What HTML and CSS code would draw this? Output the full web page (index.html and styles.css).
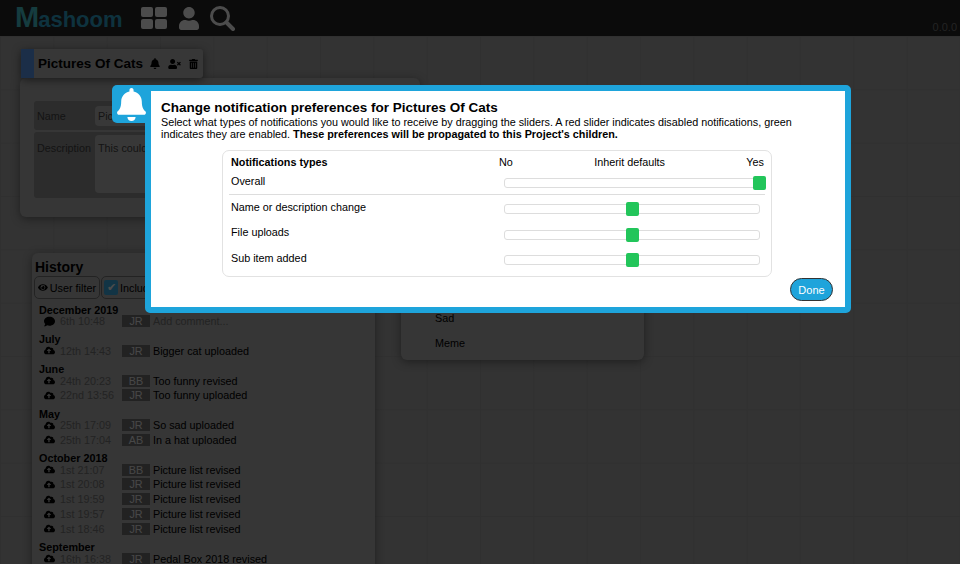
FILE: index.html
```html
<!DOCTYPE html>
<html lang="en">
<head>
    <meta charset="UTF-8">
    <title>Mashoom</title>
    <link rel="stylesheet" href="styles.css">
</head>
<body>
    <!-- Icons used more than once -->
    <svg class="defs" width="0" height="0">
        <symbol id="i-bell" viewBox="0 0 448 512"><path d="M224 512c35.32 0 63.97-28.65 63.97-64H160.03c0 35.35 28.65 64 63.97 64zm215.39-149.71c-19.32-20.76-55.47-51.99-55.47-154.29 0-77.7-54.48-139.9-127.94-155.16V32c0-17.67-14.32-32-31.98-32s-31.98 14.33-31.98 32v20.84C118.56 68.1 64.08 130.3 64.08 208c0 102.3-36.15 133.53-55.47 154.29-6 6.45-8.66 14.16-8.61 21.71.11 16.4 12.98 32 32.1 32h383.8c19.12 0 32-15.6 32.1-32 .05-7.55-2.61-15.27-8.61-21.71z"/></symbol>
        <symbol id="i-cloud" viewBox="0 0 640 512"><path d="M537.6 226.6c4.1-10.7 6.4-22.4 6.4-34.6 0-53-43-96-96-96-19.7 0-38.1 6-53.3 16.2C367 64.2 315.3 32 256 32c-88.4 0-160 71.6-160 160 0 2.7.1 5.4.2 8.1C40.2 219.8 0 273.2 0 336c0 79.5 64.5 144 144 144h368c70.7 0 128-57.3 128-128 0-61.9-44-113.6-102.4-125.4zM393.4 288H328v112c0 8.8-7.2 16-16 16h-48c-8.8 0-16-7.2-16-16V288h-65.4c-14.3 0-21.4-17.2-11.3-27.3l105.4-105.4c6.2-6.2 16.4-6.2 22.6 0l105.4 105.4c10.1 10.1 3 27.3-11.3 27.3z"/></symbol>
        <symbol id="i-comment" viewBox="0 0 512 512"><path d="M256 32C114.6 32 0 125.1 0 240c0 49.6 21.4 95 57 130.7C44.5 421.1 2.7 466 2.2 466.5c-2.2 2.3-2.8 5.7-1.5 8.7S4.8 480 8 480c66.3 0 116-31.8 140.6-51.4 32.7 12.3 69 19.4 107.4 19.4 141.4 0 256-93.1 256-208S397.4 32 256 32z"/></symbol>
    </svg>

    <header class="topbar">
        <div class="logo"><span class="logo-m">M</span>ashoom</div>
        <nav class="topnav">
            <svg class="nav-icon" width="26" height="22" viewBox="0 0 26 22"><rect width="12" height="10" rx="2"/><rect x="14" width="12" height="10" rx="2"/><rect y="12" width="12" height="10" rx="2"/><rect x="14" y="12" width="12" height="10" rx="2"/></svg>
            <svg class="nav-icon" width="20" height="23" viewBox="0 0 448 512"><path d="M224 256c70.7 0 128-57.3 128-128S294.7 0 224 0 96 57.3 96 128s57.3 128 128 128zm89.6 32h-16.7c-22.2 10.2-46.9 16-72.9 16s-50.6-5.8-72.9-16h-16.7C60.2 288 0 348.2 0 422.4V464c0 26.5 21.5 48 48 48h352c26.5 0 48-21.5 48-48v-41.6c0-74.2-60.2-134.4-134.4-134.4z"/></svg>
            <svg class="nav-search" width="25" height="25" viewBox="0 0 25 25"><circle cx="10" cy="10" r="8.5"/><line x1="16.5" y1="16.5" x2="23" y2="23"/></svg>
        </nav>
        <span class="version">0.0.0</span>
    </header>

    <!-- The project canvas, dimmed behind the dialog -->
    <main class="canvas">
        <section class="card details-card">
            <div class="field-row name-row">
                <span class="field-label">Name</span>
                <span class="field-value">Pictures Of Cats</span>
            </div>
            <div class="field-row desc-row">
                <span class="field-label">Description</span>
                <span class="field-value desc-value">This could be anything</span>
            </div>
        </section>

        <div class="title-bar">
            <span class="title-stripe"></span>
            <span class="title-text">Pictures Of Cats</span>
            <svg class="title-icon" width="10" height="11"><use href="#i-bell"/></svg>
            <svg class="title-icon" width="13" height="10" viewBox="0 0 640 512"><path d="M589.6 240l45.6-45.6c6.3-6.3 6.3-16.5 0-22.8l-22.8-22.8c-6.3-6.3-16.5-6.3-22.8 0L544 194.4l-45.6-45.6c-6.3-6.3-16.5-6.3-22.8 0l-22.8 22.8c-6.3 6.3-6.3 16.5 0 22.8l45.6 45.6-45.6 45.6c-6.3 6.3-6.3 16.5 0 22.8l22.8 22.8c6.3 6.3 16.5 6.3 22.8 0l45.6-45.6 45.6 45.6c6.3 6.3 16.5 6.3 22.8 0l22.8-22.8c6.3-6.3 6.3-16.5 0-22.8L589.6 240zM224 256c70.7 0 128-57.3 128-128S294.7 0 224 0 96 57.3 96 128s57.3 128 128 128zm89.6 32h-16.7c-22.2 10.2-46.9 16-72.9 16s-50.6-5.8-72.9-16h-16.7C60.2 288 0 348.2 0 422.4V464c0 26.5 21.5 48 48 48h352c26.5 0 48-21.5 48-48v-41.6c0-74.2-60.2-134.4-134.4-134.4z"/></svg>
            <svg class="title-icon" width="9" height="10" viewBox="0 0 448 512"><path d="M32 464a48 48 0 0 0 48 48h288a48 48 0 0 0 48-48V128H32zm272-256a16 16 0 0 1 32 0v224a16 16 0 0 1-32 0zm-96 0a16 16 0 0 1 32 0v224a16 16 0 0 1-32 0zm-96 0a16 16 0 0 1 32 0v224a16 16 0 0 1-32 0zM432 32H312l-9.4-18.7A24 24 0 0 0 281.1 0H166.8a23.72 23.72 0 0 0-21.4 13.3L136 32H16A16 16 0 0 0 0 48v32a16 16 0 0 0 16 16h416a16 16 0 0 0 16-16V48a16 16 0 0 0-16-16z"/></svg>
        </div>

        <section class="card list-card">
            <div class="list-item">Sad</div>
            <div class="list-item">Meme</div>
        </section>

        <section class="card history-card">
            <h2 class="history-title">History</h2>
            <div class="history-filters">
                <span class="filter-btn">
                    <svg width="11" height="9" viewBox="0 0 576 512"><path d="M572.52 241.4C518.29 135.59 410.93 64 288 64S57.68 135.64 3.48 241.41a32.35 32.35 0 0 0 0 29.19C57.71 376.41 165.07 448 288 448s230.32-71.64 284.52-177.41a32.35 32.35 0 0 0 0-29.19zM288 400a144 144 0 1 1 144-144 143.93 143.93 0 0 1-144 144zm0-240a95.31 95.31 0 0 0-25.31 3.79 47.85 47.85 0 0 1-66.9 66.9A95.78 95.78 0 1 0 288 160z"/></svg>
                    User filter
                </span>
                <span class="filter-btn include-btn"><span class="checkbox">&#10004;</span>Include children</span>
            </div>

            <div class="month">December 2019</div>
            <div class="event"><svg class="event-icon comment-icon"><use href="#i-comment"/></svg><span class="event-date">6th 10:48</span><span class="badge">JR</span><span class="event-text muted">Add comment...</span></div>

            <div class="month">July</div>
            <div class="event"><svg class="event-icon"><use href="#i-cloud"/></svg><span class="event-date">12th 14:43</span><span class="badge">JR</span><span class="event-text">Bigger cat uploaded</span></div>

            <div class="month">June</div>
            <div class="event"><svg class="event-icon"><use href="#i-cloud"/></svg><span class="event-date">24th 20:23</span><span class="badge">BB</span><span class="event-text">Too funny revised</span></div>
            <div class="event"><svg class="event-icon"><use href="#i-cloud"/></svg><span class="event-date">22nd 13:56</span><span class="badge">JR</span><span class="event-text">Too funny uploaded</span></div>

            <div class="month">May</div>
            <div class="event"><svg class="event-icon"><use href="#i-cloud"/></svg><span class="event-date">25th 17:09</span><span class="badge">JR</span><span class="event-text">So sad uploaded</span></div>
            <div class="event"><svg class="event-icon"><use href="#i-cloud"/></svg><span class="event-date">25th 17:04</span><span class="badge">AB</span><span class="event-text">In a hat uploaded</span></div>

            <div class="month">October 2018</div>
            <div class="event"><svg class="event-icon"><use href="#i-cloud"/></svg><span class="event-date">1st 21:07</span><span class="badge">BB</span><span class="event-text">Picture list revised</span></div>
            <div class="event"><svg class="event-icon"><use href="#i-cloud"/></svg><span class="event-date">1st 20:08</span><span class="badge">JR</span><span class="event-text">Picture list revised</span></div>
            <div class="event"><svg class="event-icon"><use href="#i-cloud"/></svg><span class="event-date">1st 19:59</span><span class="badge">JR</span><span class="event-text">Picture list revised</span></div>
            <div class="event"><svg class="event-icon"><use href="#i-cloud"/></svg><span class="event-date">1st 19:57</span><span class="badge">JR</span><span class="event-text">Picture list revised</span></div>
            <div class="event"><svg class="event-icon"><use href="#i-cloud"/></svg><span class="event-date">1st 18:46</span><span class="badge">JR</span><span class="event-text">Picture list revised</span></div>

            <div class="month">September</div>
            <div class="event"><svg class="event-icon"><use href="#i-cloud"/></svg><span class="event-date">16th 16:38</span><span class="badge">JR</span><span class="event-text">Pedal Box 2018 revised</span></div>
        </section>
    </main>

    <div class="overlay"></div>

    <!-- Notification preferences dialog -->
    <div class="dialog">
        <div class="dialog-tab">
            <svg width="29" height="33"><use href="#i-bell"/></svg>
        </div>
        <h1 class="dialog-title">Change notification preferences for Pictures Of Cats</h1>
        <p class="dialog-text">Select what types of notifications you would like to receive by dragging the sliders. A red slider indicates disabled notifications, green indicates they are enabled. <b>These preferences will be propagated to this Project's children.</b></p>

        <div class="prefs">
            <div class="prefs-head">
                <b>Notifications types</b>
                <div class="prefs-scale"><span>No</span><span>Inherit defaults</span><span>Yes</span></div>
            </div>
            <div class="pref-row overall-row">
                <span>Overall</span>
                <div class="slider"><span class="handle handle-end"></span></div>
            </div>
            <div class="pref-row">
                <span>Name or description change</span>
                <div class="slider"><span class="handle"></span></div>
            </div>
            <div class="pref-row">
                <span>File uploads</span>
                <div class="slider"><span class="handle"></span></div>
            </div>
            <div class="pref-row">
                <span>Sub item added</span>
                <div class="slider"><span class="handle"></span></div>
            </div>
        </div>

        <div class="dialog-foot">
            <button class="done-btn">Done</button>
        </div>
    </div>
</body>
</html>
```

FILE: styles.css
```css
* {
    box-sizing: border-box;
}

body {
    margin: 0;
    height: 564px;
    overflow: hidden;
    font-family: 'Liberation Sans', Arial, sans-serif;
    font-size: 10.8px;
    color: #000;
    background-color: #aaa;
}

.defs {
    position: absolute;
}

/* Top bar */
.topbar {
    display: flex;
    align-items: center;
    height: 36px;
    padding-left: 15px;
    background-color: #252525;
    position: relative;
}

.logo {
    width: 126px;
    font-size: 22px;
    font-weight: bold;
    color: #30a8d0;
    line-height: 36px;
    white-space: nowrap;
}

.logo-m {
    font-size: 29px;
    color: #48c8d4;
    letter-spacing: -1px;
}

.topnav {
    display: flex;
    align-items: center;
    gap: 12px;
}

.nav-icon {
    fill: #fff;
}

.nav-search {
    margin-left: -1px;
    fill: none;
    stroke: #fff;
    stroke-width: 3;
}

.nav-search line {
    stroke-width: 4;
    stroke-linecap: round;
}

.version {
    position: absolute;
    right: 3px;
    top: 21px;
    font-size: 11px;
    color: #777;
}

/* Canvas behind the dialog */
.canvas {
    height: 528px;
    background-color: #aaa;
    background-image:
        linear-gradient(#a2a2a2 1px, transparent 1px),
        linear-gradient(90deg, #a2a2a2 1px, transparent 1px);
    background-size: 53.33px 53.33px;
    position: relative;
}

.card {
    position: absolute;
    background-color: #b4b4b4;
    border-radius: 6px;
    box-shadow: 0 2px 10px rgba(0, 0, 0, 0.4);
}

.details-card {
    left: 20px;
    top: 42px;
    width: 400px;
    height: 139px;
    padding: 23px 14px 0;
}

.field-row {
    display: flex;
    background-color: #939393;
    border-radius: 3px;
    padding: 3px;
    color: #444;
}

.name-row {
    height: 29px;
    align-items: center;
    margin-bottom: 2px;
}

.desc-row {
    height: 66px;
    padding-top: 3px;
}

.field-label {
    width: 58px;
}

.desc-row .field-label {
    padding-top: 7px;
}

.field-value {
    flex: 1;
    background-color: #bdbdbd;
    border-radius: 4px;
    padding: 4px 3px;
}

.desc-value {
    height: 58px;
    padding-top: 7px;
}

.title-bar {
    position: absolute;
    left: 21px;
    top: 13px;
    width: 182px;
    height: 29px;
    display: flex;
    align-items: center;
    background-color: #b8b8b8;
    border-radius: 3px;
    box-shadow: 0 2px 8px rgba(0, 0, 0, 0.5);
}

.title-stripe {
    flex: none;
    width: 13px;
    height: 100%;
    background-color: #5a9cf0;
    margin-right: 4px;
}

.title-text {
    font-size: 13.5px;
    font-weight: bold;
    white-space: nowrap;
    margin-right: 7px;
}

.title-icon {
    flex: none;
    margin-right: 8px;
}

.list-card {
    left: 401px;
    top: 251px;
    width: 243px;
    height: 73px;
    padding: 25px 0 0 34px;
}

.list-item {
    height: 25px;
    line-height: 12px;
}

.history-card {
    left: 32px;
    top: 217px;
    width: 343px;
    height: 320px;
    padding: 6px 3px;
    overflow: hidden;
}

.history-title {
    margin: 0 0 1px;
    font-size: 14px;
    line-height: 16px;
}

.history-filters {
    display: flex;
    gap: 1px;
    margin-left: -1px;
    margin-bottom: 3.5px;
}

.filter-btn {
    display: flex;
    align-items: center;
    gap: 2px;
    height: 23px;
    width: 66px;
    padding: 0 3px;
    border: 1px solid #777;
    border-radius: 5px;
    white-space: nowrap;
}

.include-btn {
    width: 120px;
    padding-left: 2px;
}

.checkbox {
    width: 14px;
    height: 15px;
    background-color: #3cb0e6;
    border-radius: 2px;
    color: #fff;
    text-align: center;
    line-height: 15px;
}

.month {
    margin: 5.7px 0 -2.3px 4px;
    font-weight: bold;
    line-height: 11.5px;
}

.event {
    display: flex;
    align-items: center;
    height: 14.8px;
}

.event-icon {
    width: 11px;
    height: 11px;
    margin-left: 9px;
    margin-right: 5px;
}

.event-date {
    width: 62px;
    color: #767676;
}

.badge {
    width: 28px;
    height: 12px;
    line-height: 12px;
    margin-right: 3px;
    text-align: center;
    background-color: #727272;
    color: #eee;
}

.muted {
    color: #767676;
}

.overlay {
    position: fixed;
    left: 0;
    top: 0;
    width: 100%;
    height: 100%;
    background-color: rgba(0, 0, 0, 0.7);
}

/* Dialog */
.dialog {
    position: absolute;
    left: 145px;
    top: 85px;
    width: 706px;
    height: 228px;
    padding: 9px 10px 0;
    background-color: #fff;
    border: 6px solid #1ea4db;
    border-radius: 5px;
}

.dialog-tab {
    position: absolute;
    left: -39px;
    top: -6px;
    width: 39px;
    height: 38px;
    padding: 3px 0 0 5px;
    background-color: #1ea4db;
    border-radius: 5px 0 0 5px;
    fill: #fff;
}

.dialog-title {
    margin: 0;
    font-size: 13.5px;
    line-height: 15.5px;
}

.dialog-text {
    margin: 0 0 10.7px;
    line-height: 12px;
    width: 660px;
}

.prefs {
    width: 550px;
    height: 127px;
    margin-left: 61px;
    padding: 5px 6px 0 8px;
    border: 1px solid #e2e2e2;
    border-radius: 7px;
}

.prefs-head {
    display: flex;
    justify-content: space-between;
    line-height: 13px;
    margin-bottom: 1px;
}

.prefs-scale {
    display: flex;
    justify-content: space-between;
    width: 265px;
    margin-right: 1px;
}

.pref-row {
    display: flex;
    justify-content: space-between;
    align-items: center;
    height: 25.5px;
    padding-right: 5px;
}

.pref-row > span {
    margin-bottom: 2px;
}

.overall-row {
    height: 25px;
    margin-left: -2px;
    padding-left: 2px;
    padding-bottom: 1px;
    border-bottom: 1px solid #ddd;
}

.slider {
    position: relative;
    width: 256px;
    height: 10px;
    margin-top: 3px;
    border: 1px solid #ddd;
    border-radius: 3px;
}

.handle {
    position: absolute;
    left: 121px;
    top: -3px;
    width: 13px;
    height: 14px;
    background-color: #22c55a;
    border-radius: 2px;
}

.handle-end {
    left: auto;
    right: -7px;
}

.dialog-foot {
    display: flex;
    justify-content: flex-end;
    margin-top: 1px;
    margin-right: 2px;
}

.done-btn {
    width: 43px;
    height: 23px;
    padding: 0;
    font-family: inherit;
    font-size: 11px;
    color: #fff;
    background-color: #1ea4db;
    border: 1px solid #333;
    border-radius: 12px;
}
```
